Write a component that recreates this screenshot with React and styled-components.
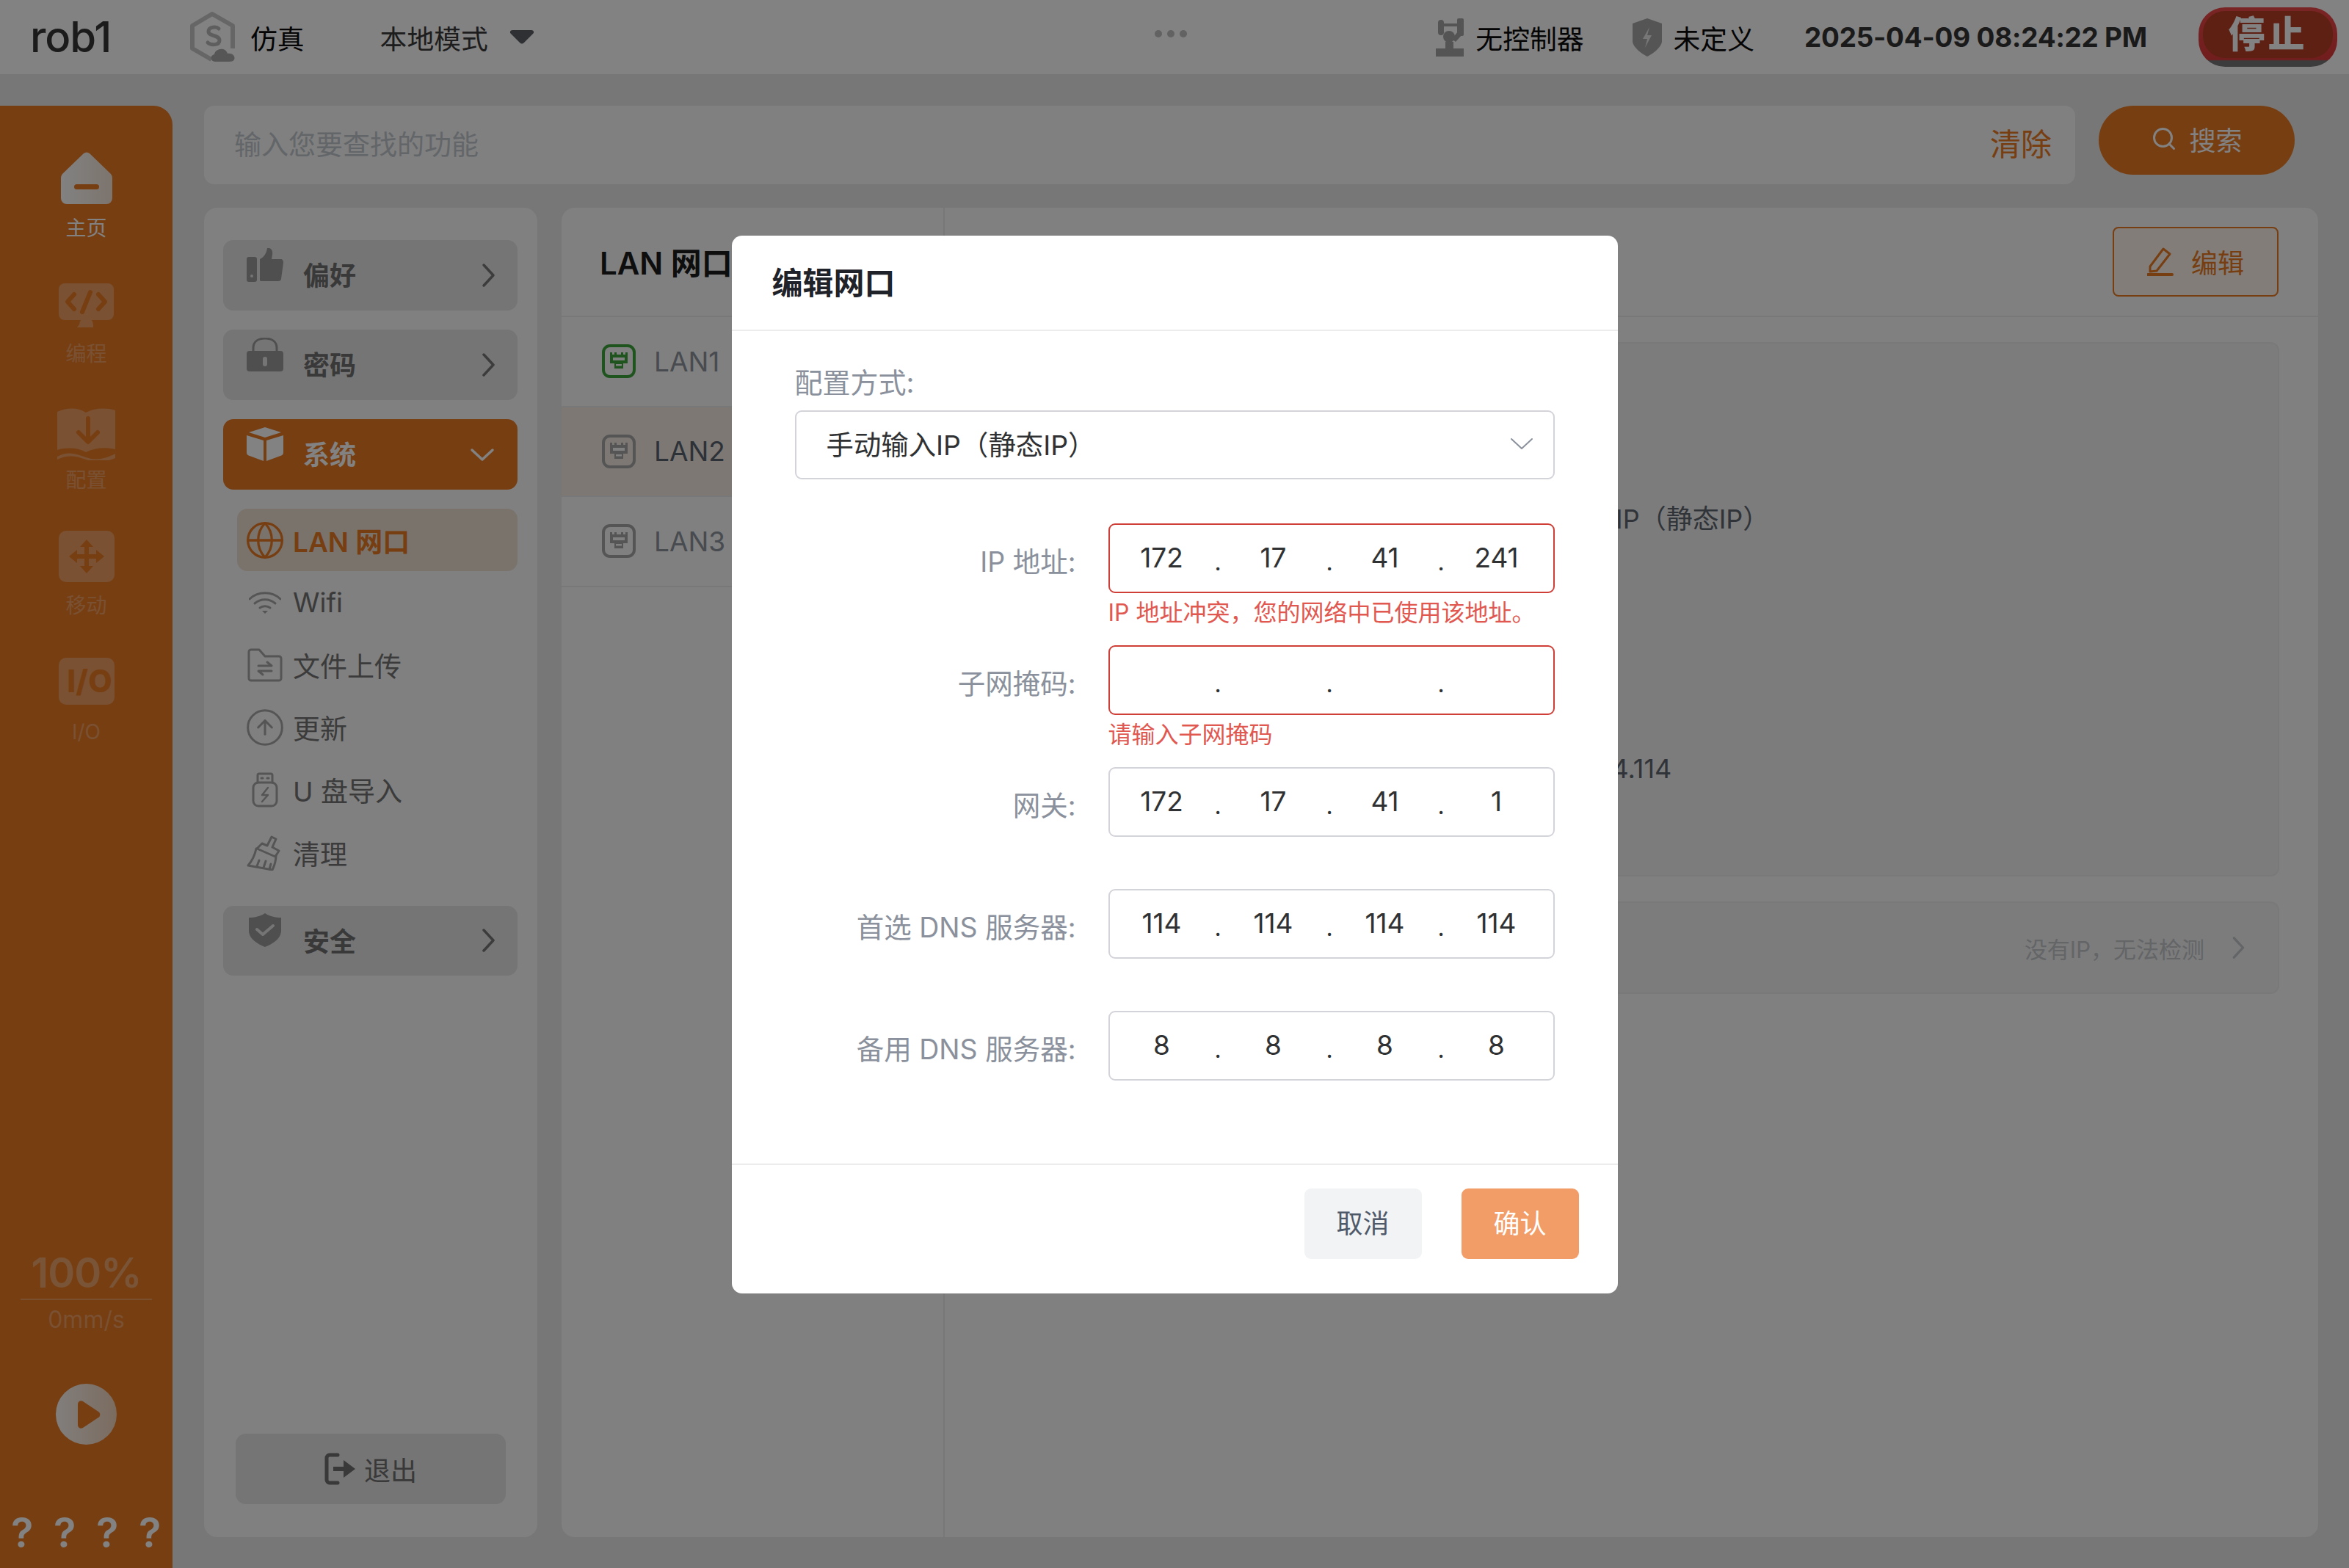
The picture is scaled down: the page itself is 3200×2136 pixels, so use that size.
import React from "react";
import styled, { createGlobalStyle } from "styled-components";
import { Globe, CircleArrowUp, Search } from "lucide-react";

const FONT = `Inter, "Noto Sans CJK SC", sans-serif`;
const ORANGE = "#e97a25";

const Global = createGlobalStyle`
  html, body { margin: 0; padding: 0; background: #e9e9e9; }
  * { box-sizing: border-box; }
  body { font-family: ${FONT}; }
`;

const Page = styled.div`
  position: relative;
  width: 3200px;
  height: 2136px;
  overflow: hidden;
  display: flex;
  flex-direction: column;
  background: #e9e9e9;
`;

/* ---------- header ---------- */
const Header = styled.header`
  position: relative;
  flex: 0 0 101px;
  display: flex;
  align-items: center;
  background: #fff;
  padding: 0 16px 0 41px;
`;
const Brand = styled.div`
  font-size: 58px;
  font-weight: 500;
  color: #353535;
  letter-spacing: -1px;
  width: 217px;
  margin-top: -2px;
`;
const HeadItem = styled.div`
  display: flex;
  align-items: center;
  font-size: 36.8px;
  color: ${(p) => p.$color || "#0a0a0a"};
  gap: ${(p) => p.$gap || 16}px;
  margin-left: ${(p) => p.$ml || 0}px;
`;
const HeadDots = styled.div`
  position: absolute;
  left: 1573px;
  top: 41px;
  display: flex;
  gap: 7px;
  & > i { width: 10px; height: 10px; border-radius: 50%; background: #c0c0c0; display: block; }
`;
const Spacer = styled.div`
  flex: 1;
`;
const Clock = styled.div`
  font-size: 36.9px;
  font-weight: 700;
  letter-spacing: -0.2px;
  color: #333;
  margin-left: 68px;
  white-space: nowrap;
`;
const StopButton = styled.button`
  margin-left: 70px;
  width: 189px;
  height: 81px;
  border-radius: 36px;
  border: 0;
  padding: 5px 6px 12px;
  background: linear-gradient(#ef4a4a, #e03a3a 88%, #777 90%);
  display: flex;
`;
const StopInner = styled.span`
  flex: 1;
  border-radius: 30px;
  background: #b83f26;
  color: #fff;
  font-family: ${FONT};
  font-size: 50px;
  font-weight: 900;
  letter-spacing: 4px;
  line-height: 64px;
  text-align: center;
`;

/* ---------- layout ---------- */
const Body = styled.div`
  flex: 1;
  min-height: 0;
  display: flex;
`;
const Rail = styled.nav`
  flex: 0 0 235px;
  margin-top: 43px;
  border-top-right-radius: 26px;
  background: ${ORANGE};
  display: flex;
  flex-direction: column;
  align-items: center;
  padding-top: 56px;
`;
const RailItem = styled.div`
  height: 171.4px;
  display: flex;
  flex-direction: column;
  align-items: center;
  opacity: ${(p) => (p.$active ? 1 : 0.28)};
`;
const RailIconBox = styled.div`
  height: 84px;
  padding-bottom: ${(p) => p.$lift + 4}px;
  display: flex;
  align-items: flex-end;
`;
const RailLabel = styled.div`
  font-size: 28px;
  color: #fff;
  line-height: 38px;
  margin-top: 8px;
`;
const RailBottom = styled.div`
  margin-top: auto;
  width: 100%;
  display: flex;
  flex-direction: column;
  align-items: center;
  padding-bottom: 17px;
`;
const Percent = styled.div`
  font-size: 56px;
  font-weight: 600;
  letter-spacing: -1px;
  color: rgba(255, 255, 255, 0.33);
  line-height: 70px;
  width: 179px;
  text-align: center;
  border-bottom: 2px solid rgba(255, 255, 255, 0.25);
`;
const Speed = styled.div`
  font-size: 32px;
  color: rgba(255, 255, 255, 0.28);
  line-height: 40px;
  margin-top: 7px;
`;
const PlayDisc = styled.div`
  width: 83px;
  height: 83px;
  margin-top: 67px;
  border-radius: 50%;
  background: linear-gradient(90deg, #fff, #f3d9c4);
  opacity: 0.95;
  display: flex;
  align-items: center;
  justify-content: center;
`;
const QuestionRow = styled.div`
  width: 100%;
  margin-top: 89px;
  height: 62px;
  padding: 0 20px 0 15px;
  display: flex;
  justify-content: space-between;
`;
const Question = styled.span`
  width: 26px;
  text-align: center;
  font-size: 56px;
  line-height: 62px;
  font-weight: 600;
  color: #fff;
`;

const Main = styled.main`
  flex: 1;
  min-width: 0;
  display: flex;
  flex-direction: column;
  padding: 43px 42px 42px 43px;
`;
const SearchRow = styled.div`
  flex: 0 0 107px;
  display: flex;
  gap: 32px;
  padding-right: 32px;
`;
const SearchBar = styled.div`
  flex: 1;
  display: flex;
  align-items: center;
  justify-content: space-between;
  padding: 0 32px 5px 41px;
  background: #fbfbfb;
  border-radius: 14px;
`;
const Placeholder = styled.span`
  font-size: 37px;
  color: #c3c8cf;
`;
const ClearLink = styled.span`
  font-size: 42px;
  margin-bottom: 4px;
  color: ${ORANGE};
`;
const SearchButton = styled.button`
  flex: 0 0 267px;
  height: 94px;
  border: 0;
  border-radius: 47px;
  padding-bottom: 6px;
  background: ${ORANGE};
  color: #fff;
  font-family: ${FONT};
  font-size: 36px;
  display: flex;
  align-items: center;
  justify-content: center;
  gap: 16px;
`;
const Panels = styled.div`
  flex: 1;
  min-height: 0;
  margin-top: 32px;
  display: flex;
  gap: 33px;
`;

/* ---------- menu panel ---------- */
const MenuPanel = styled.aside`
  flex: 0 0 454px;
  background: #fbfbfb;
  border-radius: 18px;
  padding: 44px 27px 45px 26px;
  display: flex;
  flex-direction: column;
  gap: 26.5px;
`;
const MenuHead = styled.div`
  flex: 0 0 95.5px;
  display: flex;
  align-items: center;
  padding: 0 ${(p) => (p.$open ? 31 : 23)}px 0 29px;
  border-radius: 14px;
  background: ${(p) => (p.$open ? ORANGE : "#e5e5e5")};
  color: ${(p) => (p.$open ? "#fff" : "#707070")};
`;
const MenuIcon = styled.span`
  width: 56px;
  height: 68px;
  display: flex;
  align-items: flex-start;
  justify-content: center;
  margin-top: -6px;
`;
const MenuTitle = styled.span`
  flex: 1;
  font-size: 36px;
  font-weight: 700;
  margin-left: 24px;
  padding-bottom: 3px;
`;
const SubList = styled.div`
  display: flex;
  flex-direction: column;
  margin: 0 0 3px 19px;
`;
const SubItem = styled.div`
  height: 85.2px;
  display: flex;
  align-items: center;
  gap: 14px;
  padding-left: 14px;
  border-radius: 14px;
  font-size: 37px;
  font-weight: ${(p) => (p.$active ? 600 : 400)};
  background: ${(p) => (p.$active ? "#efe2d4" : "transparent")};
  color: ${(p) => (p.$active ? ORANGE : "#757575")};
`;
const SubIcon = styled.span`
  width: 48px;
  height: 48px;
  display: flex;
  align-items: center;
  justify-content: center;
  color: ${(p) => (p.$active ? ORANGE : "#a8a8a8")};
  & > svg { flex: none; }
`;
const LogoutButton = styled.button`
  margin: auto 16px 0 17px;
  flex: 0 0 96px;
  border: 0;
  border-radius: 14px;
  background: #e5e5e5;
  color: #707070;
  font-family: ${FONT};
  font-size: 36px;
  display: flex;
  align-items: center;
  justify-content: center;
  gap: 10px;
`;

/* ---------- content panel ---------- */
const ContentPanel = styled.section`
  flex: 1;
  min-width: 0;
  background: #fbfbfb;
  border-radius: 18px;
  display: flex;
  overflow: hidden;
`;
const PortColumn = styled.div`
  flex: 0 0 522px;
  border-right: 2px solid #ececec;
`;
const PortHead = styled.div`
  height: 149px;
  display: flex;
  align-items: center;
  padding: 0 0 2px 52px;
  font-size: 42px;
  font-weight: 600;
  color: #1c1c1c;
  white-space: nowrap;
  border-bottom: 2px solid #ececec;
`;
const PortRow = styled.div`
  height: 122.5px;
  display: flex;
  align-items: center;
  gap: 25px;
  padding-left: 55px;
  font-size: 37px;
  border-bottom: 2px solid #ececec;
  background: ${(p) => (p.$selected ? "#f5ece4" : "transparent")};
  color: ${(p) => (p.$selected ? "#596270" : "#8d939b")};
`;
const DetailColumn = styled.div`
  flex: 1;
  min-width: 0;
  display: flex;
  flex-direction: column;
`;
const DetailHead = styled.div`
  flex: 0 0 149px;
  display: flex;
  align-items: center;
  justify-content: flex-end;
  padding-right: 54px;
  border-bottom: 2px solid #ececec;
`;
const EditButton = styled.button`
  width: 226px;
  height: 95px;
  border: 2px solid ${ORANGE};
  border-radius: 8px;
  padding-bottom: 3px;
  background: #fff6ee;
  color: ${ORANGE};
  font-family: ${FONT};
  font-size: 36px;
  display: flex;
  align-items: center;
  justify-content: center;
  gap: 24px;
`;
const DetailBox = styled.div`
  margin: 34px 53px 0 52px;
  height: 728px;
  padding-top: 64px;
  border: 2px solid #eeeeef;
  border-radius: 12px;
  background: #f3f4f5;
`;
const DetailRow = styled.div`
  height: 114.4px;
  display: flex;
  align-items: center;
  padding-left: ${(p) => p.$indent}px;
  font-size: 36px;
  color: #5e6670;
  white-space: nowrap;
`;
const CheckBox = styled.div`
  margin: 34px 53px 0 52px;
  height: 126px;
  border: 2px solid #eeeeef;
  border-radius: 12px;
  background: #f3f4f5;
  display: flex;
  align-items: center;
  justify-content: flex-end;
  gap: 30px;
  padding-right: 38px;
  font-size: 31px;
  color: #c3c6ca;
`;

/* ---------- modal ---------- */
const Overlay = styled.div`
  position: absolute;
  inset: 0;
  background: rgba(0, 0, 0, 0.49);
  display: flex;
  justify-content: center;
  align-items: flex-start;
  padding-top: 321px;
`;
const Modal = styled.div`
  width: 1207px;
  height: 1441px;
  background: #fff;
  border-radius: 14px;
  display: flex;
  flex-direction: column;
`;
const ModalHead = styled.div`
  flex: 0 0 130px;
  display: flex;
  align-items: center;
  padding: 0 0 6px 55px;
  font-size: 42px;
  font-weight: 600;
  color: #1f2329;
  border-bottom: 2px solid #ececec;
`;
const ModalBody = styled.div`
  flex: 1;
  padding: 46px 86px 0;
`;
const FieldCaption = styled.div`
  font-size: 38px;
  line-height: 48px;
  color: #8a919c;
  white-space: nowrap;
`;
const SelectBox = styled.div`
  height: 94px;
  margin-top: 14px;
  padding: 0 26px 4px 41px;
  border: 2px solid #d3d3da;
  border-radius: 9px;
  display: flex;
  align-items: center;
  justify-content: space-between;
  font-size: 37.4px;
  color: #303133;
`;
const FormRows = styled.div`
  margin-top: 60px;
  display: flex;
  flex-direction: column;
  gap: 71px;
`;
const FormRow = styled.div`
  position: relative;
  display: flex;
  gap: 44px;
`;
const RowLabel = styled.div`
  width: 383px;
  height: 95px;
  line-height: 105px;
  font-size: 37.5px;
  text-align: right;
  color: #8a919c;
  white-space: nowrap;
`;
const IpField = styled.div`
  width: 608px;
  height: 95px;
  border: 2px solid ${(p) => (p.$error ? "#cf3f38" : "#d3d3da")};
  border-radius: 9px;
  display: flex;
  align-items: center;
  & > :first-child { margin-left: -1px; }
`;
const Octet = styled.span`
  width: 144px;
  text-align: center;
  font-size: 37px;
  padding-bottom: 3px;
  color: #303133;
`;
const OctetDot = styled.span`
  width: 8px;
  text-align: center;
  font-size: 32px;
  line-height: 32px;
  padding-top: 10px;
  color: #303133;
`;
const ErrorText = styled.div`
  position: absolute;
  left: 427px;
  top: 102px;
  font-size: 32px;
  line-height: 40px;
  color: #e05850;
  white-space: nowrap;
`;
const ModalFoot = styled.div`
  flex: 0 0 177px;
  border-top: 2px solid #ececec;
  padding: 32px 53px 0 0;
  display: flex;
  justify-content: flex-end;
  gap: 54px;
`;
const FootButton = styled.button`
  width: 160px;
  height: 96px;
  border: 0;
  border-radius: 9px;
  padding: 0 0 6px;
  font-family: ${FONT};
  font-size: 36px;
  background: ${(p) => (p.$primary ? "#f29d68" : "#f2f3f5")};
  color: ${(p) => (p.$primary ? "#fff" : "#4e5969")};
`;

/* ---------- icons ---------- */
const Chevron = ({ dir = "right", size = 34, color = "#666", w = 3.5 }) => (
  <svg width={size} height={size} viewBox="0 0 34 34" fill="none" stroke={color} strokeWidth={w} strokeLinecap="round" strokeLinejoin="round">
    {dir === "right" ? <path d="M11 3l13 14-13 14" /> : <path d="M3 11l14 13 14-13" />}
  </svg>
);
const LogoS = () => (
  <svg width="66" height="70" viewBox="0 0 66 70" fill="none">
    <path d="M30 65L4 50V19L31 3l28 16v31" stroke="#c9c9c9" strokeWidth="6" strokeLinejoin="round" />
    <path d="M40 23c-3-3-14-3-14 4 0 7 15 4 15 12 0 7-12 7-16 3" stroke="#b9b9b9" strokeWidth="5" strokeLinecap="round" />
    <path d="M35 68c-7 0-7-9-1-10 1-8 15-11 18-1 10-2 14 11 3 11z" fill="#aaa" />
  </svg>
);
const RobotArm = () => (
  <svg width="38" height="52" viewBox="0 0 38 52" fill="#a6a6a6">
    <rect y="41" width="38" height="11" />
    <rect x="13" y="32" width="11" height="10" />
    <circle cx="18" cy="25" r="8" />
    <rect x="29" y="0" width="9" height="24" rx="2" />
    <path d="M30 18l6 4-9 10-5-4z" />
    <rect x="3" y="2" width="8" height="21" rx="4" />
    <rect x="8" y="7" width="22" height="4" />
  </svg>
);
const BoltShield = () => (
  <svg width="40" height="52" viewBox="0 0 40 52">
    <path d="M20 0l20 7v24c0 8-12 17-20 21C12 48 0 39 0 31V7z" fill="#a8a8a8" />
    <path d="M23 12l-9 16h6l-3 12 9-17h-6z" fill="#e9e9e9" />
  </svg>
);
const HomeIcon = () => (
  <svg width="70" height="71" viewBox="0 0 70 71">
    <defs>
      <linearGradient id="hg" x1="0" x2="1" y1="0" y2="0">
        <stop offset="0" stopColor="#fff" /><stop offset="1" stopColor="#f5e4d6" />
      </linearGradient>
    </defs>
    <path d="M31 2a6 6 0 0 1 8 0l27 26a10 10 0 0 1 4 8v27a8 8 0 0 1-8 8H8a8 8 0 0 1-8-8V36a10 10 0 0 1 4-8z" fill="url(#hg)" />
    <rect x="18" y="44" width="34" height="7" rx="3.5" fill={ORANGE} />
  </svg>
);
const CodeIcon = () => (
  <svg width="75" height="60" viewBox="0 0 75 60">
    <rect width="75" height="50" rx="8" fill="#fff" />
    <path d="M28 56a9 9 0 0 1 19 0v4H25z" fill="#fff" />
    <path d="M21 15L12 25l9 10M54 15l9 10-9 10" fill="none" stroke={ORANGE} strokeWidth="6" strokeLinecap="round" strokeLinejoin="round" />
    <path d="M43 12l-11 27" stroke={ORANGE} strokeWidth="6" strokeLinecap="round" />
  </svg>
);
const BookIcon = () => (
  <svg width="79" height="71" viewBox="0 0 79 71">
    <path d="M0 5c14-6 28-6 39 1 12-6 26-7 40-3v53c-14-3-28-2-40 4-11-6-25-7-39-3z" fill="#fff" />
    <path d="M0 66c14-8 26-4 39 1 14 5 26 2 40-5v6c-14 6-26 7-40 2-13-5-25-7-39 0z" fill="#fff" />
    <path d="M42 14v30M29 33l13 13 13-13" fill="none" stroke={ORANGE} strokeWidth="6" strokeLinecap="round" strokeLinejoin="round" />
  </svg>
);
const MoveIcon = () => (
  <svg width="76" height="70" viewBox="0 0 76 70">
    <rect width="76" height="70" rx="10" fill="#fff" />
    <path d="M38 12l9 10h-6v10h10v-6l11 9-11 9v-6H41v10h6l-9 10-9-10h6V38H25v6l-11-9 11-9v6h10V22h-6z" fill={ORANGE} />
  </svg>
);
const IoIcon = () => (
  <svg width="76" height="64" viewBox="0 0 76 64">
    <rect width="76" height="64" rx="10" fill="#fff" />
    <text x="42" y="47" textAnchor="middle" fontFamily="Inter, sans-serif" fontSize="42" fontWeight="800" fill={ORANGE}>I/O</text>
  </svg>
);
const PlayIcon = () => (
  <svg width="34" height="40" viewBox="0 0 34 40" style={{ marginLeft: 6 }}>
    <path d="M2 6c0-4 4-6 7-4l21 14c3 2 3 6 0 8L9 38c-3 2-7 0-7-4z" fill={ORANGE} />
  </svg>
);
const ThumbIcon = () => (
  <svg width="50" height="46" viewBox="0 0 50 46" fill="#9c9c9c">
    <rect y="12" width="14" height="34" rx="3" />
    <path d="M18 44V15c6-3 9-8 10-15 5-1 8 3 7 9l-1 6h12c3 0 4 2 4 5l-3 22c0 2-2 3-4 3H20a2 2 0 0 1-2-1z" />
    <circle cx="7" cy="38" r="2" fill="#e5e5e5" />
  </svg>
);
const LockIcon = () => (
  <svg width="50" height="46" viewBox="0 0 50 46">
    <path d="M9 20v-6C9 5 16 1 25 1s16 4 16 13v6" fill="none" stroke="#9c9c9c" strokeWidth="3" />
    <rect y="18" width="50" height="28" rx="4" fill="#9c9c9c" />
    <rect x="22" y="26" width="6" height="13" rx="3" fill="#e5e5e5" />
  </svg>
);
const CubeIcon = () => (
  <svg width="50" height="46" viewBox="0 0 50 46" fill="#fff">
    <path d="M25 0l22 7-22 7L3 7z" />
    <path d="M0 11l23 7v28L4 39c-3-1-4-2-4-5z" />
    <path d="M50 11l-23 7v28l19-7c3-1 4-2 4-5z" />
  </svg>
);
const ShieldCheck = () => (
  <svg width="44" height="46" viewBox="0 0 44 46">
    <path d="M22 0c6 4 14 6 22 6v18c0 11-12 18-22 22C12 42 0 35 0 24V6c8 0 16-2 22-6z" fill="#9c9c9c" />
    <path d="M11 22l8 7 14-12" fill="none" stroke="#e5e5e5" strokeWidth="4" strokeLinecap="round" strokeLinejoin="round" />
  </svg>
);
const WifiIcon = () => (
  <svg width="44" height="32" viewBox="0 0 44 32" fill="none" stroke="#a8a8a8" strokeWidth="3" strokeLinecap="round">
    <path d="M1 11C12 0 32 0 43 11" />
    <path d="M8 17c8-7 20-7 28 0" />
    <path d="M15 23c4-3 10-3 14 0" />
    <path d="M18 27h8l-4 4z" fill="#a8a8a8" stroke="none" />
  </svg>
);
const FolderSwap = () => (
  <svg width="48" height="46" viewBox="0 0 48 46" fill="none" stroke="#a8a8a8" strokeWidth="3" strokeLinejoin="round" strokeLinecap="round">
    <path d="M2 5a3 3 0 0 1 3-3h11l8 9h19a3 3 0 0 1 3 3v27a3 3 0 0 1-3 3H5a3 3 0 0 1-3-3z" />
    <path d="M15 24h18l-6-5M33 31H15l6 5" />
  </svg>
);
const UsbIcon = () => (
  <svg width="36" height="48" viewBox="0 0 36 48" fill="none" stroke="#a8a8a8" strokeWidth="3" strokeLinejoin="round" strokeLinecap="round">
    <path d="M8 14V4a2 2 0 0 1 2-2h16a2 2 0 0 1 2 2v10" />
    <path d="M13 8h2M21 8h2" />
    <rect x="2" y="14" width="32" height="32" rx="7" />
    <path d="M22 21l-8 10h8l-8 9" strokeWidth="2.5" />
  </svg>
);
const BrushIcon = () => (
  <svg width="50" height="48" viewBox="0 0 50 48" fill="none" stroke="#a8a8a8" strokeWidth="3" strokeLinejoin="round" strokeLinecap="round">
    <path d="M34 2l6 3-5 11 9 5-5 8-25-11 7-7 7 3z" />
    <path d="M13 18C11 28 7 35 2 41l33 6c3-6 5-12 5-20" />
    <path d="M14 42l3-8M23 44l3-9M31 46l2-7" />
  </svg>
);
const LogoutIcon = () => (
  <svg width="44" height="44" viewBox="0 0 44 44" fill="none">
    <path d="M18 3H7a4 4 0 0 0-4 4v30a4 4 0 0 0 4 4h11" stroke="#707070" strokeWidth="5" strokeLinecap="round" />
    <path d="M12 19h14v-9l16 12-16 12v-9H12z" fill="#707070" />
  </svg>
);
const PortIcon = ({ color = "#a8a8a8" }) => (
  <svg width="46" height="46" viewBox="0 0 46 46" fill="none">
    <rect x="2" y="2" width="42" height="42" rx="9" stroke={color} strokeWidth="4" />
    <path d="M11 11h3v3h3v-3h3v3h6v-3h3v3h3v-3h3v15h-6v7H17v-7h-6z" fill={color} />
    <rect x="19" y="27" width="8" height="2.5" fill="#fbfbfb" />
    <rect x="15" y="18" width="16" height="4" fill="#fbfbfb" />
  </svg>
);
const PenIcon = () => (
  <svg width="36" height="40" viewBox="0 0 36 40" fill="none" stroke={ORANGE} strokeWidth="3" strokeLinejoin="round">
    <path d="M4 27L22 3l9 7-18 23-9 1z" />
    <path d="M1 38h33" strokeWidth="4" strokeLinecap="round" />
  </svg>
);

/* ---------- data ---------- */
const railItems = [
  { label: "主页", icon: <HomeIcon />, active: true, lift: 2 },
  { label: "编程", icon: <CodeIcon />, lift: 5 },
  { label: "配置", icon: <BookIcon />, lift: -4 },
  { label: "移动", icon: <MoveIcon />, lift: 1 },
  { label: "I/O", icon: <IoIcon />, lift: 6 },
];
const subItems = [
  { label: "LAN 网口", icon: <Globe size={56} strokeWidth={1.4} />, active: true },
  { label: "Wifi", icon: <WifiIcon /> },
  { label: "文件上传", icon: <FolderSwap /> },
  { label: "更新", icon: <CircleArrowUp size={56} strokeWidth={1.3} /> },
  { label: "U 盘导入", icon: <UsbIcon /> },
  { label: "清理", icon: <BrushIcon /> },
];
const ipRows = [
  { label: "IP 地址:", octets: ["172", "17", "41", "241"], error: "IP 地址冲突，您的网络中已使用该地址。" },
  { label: "子网掩码:", octets: ["", "", "", ""], error: "请输入子网掩码" },
  { label: "网关:", octets: ["172", "17", "41", "1"] },
  { label: "首选 DNS 服务器:", octets: ["114", "114", "114", "114"] },
  { label: "备用 DNS 服务器:", octets: ["8", "8", "8", "8"] },
];

const IpInput = ({ octets, error }) => (
  <IpField $error={error}>
    {octets.map((o, i) => (
      <React.Fragment key={i}>
        <Octet>{o}</Octet>
        {i < 3 && <OctetDot>.</OctetDot>}
      </React.Fragment>
    ))}
  </IpField>
);

export default function App() {
  return (
    <Page>
      <Global />
      <Header>
        <Brand>rob1</Brand>
        <HeadItem $gap={17}><LogoS />仿真</HeadItem>
        <HeadItem $ml={103} $gap={30} $color="#3a3a3a">
          本地模式
          <svg width="32" height="19" viewBox="0 0 32 19"><path d="M3 0h26c3 0 4 3 2 5L19 17c-2 2-4 2-6 0L1 5C-1 3 0 0 3 0z" fill="#5a5f66" /></svg>
        </HeadItem>
        <HeadDots><i /><i /><i /></HeadDots>
        <Spacer />
        <HeadItem $gap={16}><RobotArm />无控制器</HeadItem>
        <HeadItem $ml={66} $gap={16}><BoltShield />未定义</HeadItem>
        <Clock>2025-04-09 08:24:22 PM</Clock>
        <StopButton><StopInner>停止</StopInner></StopButton>
      </Header>
      <Body>
        <Rail>
          {railItems.map((r) => (
            <RailItem key={r.label} $active={r.active}>
              <RailIconBox $lift={r.lift}>{r.icon}</RailIconBox>
              <RailLabel>{r.label}</RailLabel>
            </RailItem>
          ))}
          <RailBottom>
            <Percent>100%</Percent>
            <Speed>0mm/s</Speed>
            <PlayDisc><PlayIcon /></PlayDisc>
            <QuestionRow>
              <Question>?</Question><Question>?</Question><Question>?</Question><Question>?</Question>
            </QuestionRow>
          </RailBottom>
        </Rail>
        <Main>
          <SearchRow>
            <SearchBar>
              <Placeholder>输入您要查找的功能</Placeholder>
              <ClearLink>清除</ClearLink>
            </SearchBar>
            <SearchButton><Search size={36} strokeWidth={2} />搜索</SearchButton>
          </SearchRow>
          <Panels>
            <MenuPanel>
              <MenuHead>
                <MenuIcon><ThumbIcon /></MenuIcon>
                <MenuTitle>偏好</MenuTitle>
                <Chevron color="#767676" />
              </MenuHead>
              <MenuHead>
                <MenuIcon><LockIcon /></MenuIcon>
                <MenuTitle>密码</MenuTitle>
                <Chevron color="#767676" />
              </MenuHead>
              <MenuHead $open>
                <MenuIcon><CubeIcon /></MenuIcon>
                <MenuTitle>系统</MenuTitle>
                <Chevron dir="down" color="#fff" />
              </MenuHead>
              <SubList>
                {subItems.map((s) => (
                  <SubItem key={s.label} $active={s.active}>
                    <SubIcon $active={s.active}>{s.icon}</SubIcon>
                    {s.label}
                  </SubItem>
                ))}
              </SubList>
              <MenuHead>
                <MenuIcon><ShieldCheck /></MenuIcon>
                <MenuTitle>安全</MenuTitle>
                <Chevron color="#767676" />
              </MenuHead>
              <LogoutButton><LogoutIcon />退出</LogoutButton>
            </MenuPanel>
            <ContentPanel>
              <PortColumn>
                <PortHead>LAN 网口</PortHead>
                <PortRow><PortIcon color="#3da53d" />LAN1</PortRow>
                <PortRow $selected><PortIcon />LAN2</PortRow>
                <PortRow><PortIcon />LAN3</PortRow>
              </PortColumn>
              <DetailColumn>
                <DetailHead>
                  <EditButton><PenIcon />编辑</EditButton>
                </DetailHead>
                <DetailBox>
                  <DetailRow $indent={716} />
                  <DetailRow $indent={716}>手动输入IP（静态IP）</DetailRow>
                  <DetailRow $indent={716} />
                  <DetailRow $indent={716} />
                  <DetailRow $indent={708}>114.114.114.114</DetailRow>
                </DetailBox>
                <CheckBox>
                  没有IP，无法检测
                  <Chevron color="#c3c6ca" size={32} />
                </CheckBox>
              </DetailColumn>
            </ContentPanel>
          </Panels>
        </Main>
      </Body>
      <Overlay>
        <Modal>
          <ModalHead>编辑网口</ModalHead>
          <ModalBody>
            <FieldCaption>配置方式:</FieldCaption>
            <SelectBox>
              手动输入IP（静态IP）
              <Chevron dir="down" color="#8a919c" w={2} />
            </SelectBox>
            <FormRows>
              {ipRows.map((r) => (
                <FormRow key={r.label}>
                  <RowLabel>{r.label}</RowLabel>
                  <IpInput octets={r.octets} error={!!r.error} />
                  {r.error && <ErrorText>{r.error}</ErrorText>}
                </FormRow>
              ))}
            </FormRows>
          </ModalBody>
          <ModalFoot>
            <FootButton>取消</FootButton>
            <FootButton $primary>确认</FootButton>
          </ModalFoot>
        </Modal>
      </Overlay>
    </Page>
  );
}
